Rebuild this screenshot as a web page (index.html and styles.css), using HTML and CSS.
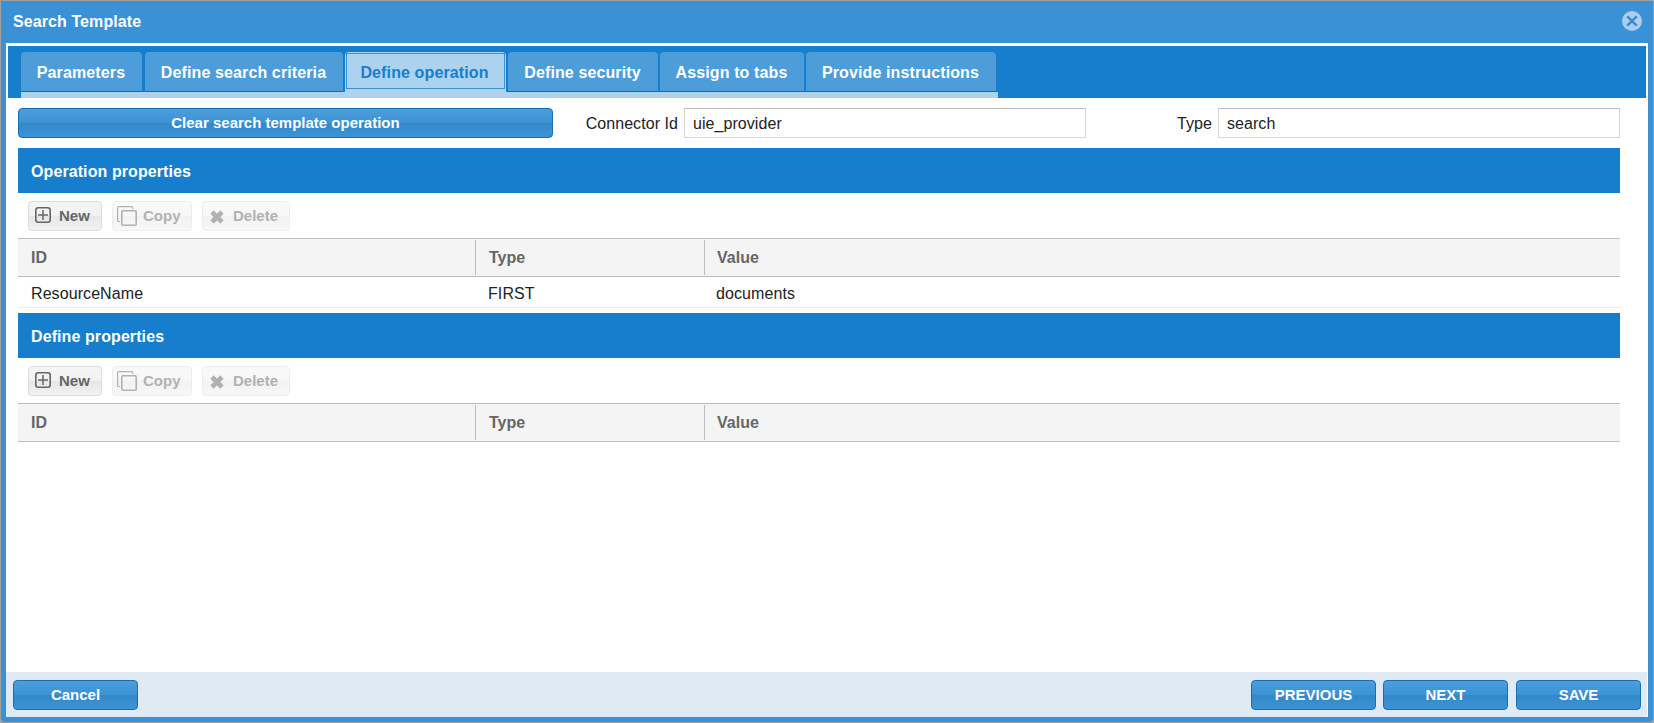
FILE: index.html
```html
<!DOCTYPE html>
<html lang="en">
<head>
<meta charset="utf-8">
<title>Search Template</title>
<link rel="stylesheet" href="styles.css">
</head>
<body>
<svg class="defs" width="0" height="0">
  <symbol id="plus" viewBox="0 0 16 16"><rect x="0.8" y="0.8" width="14.4" height="14.4" rx="2.4" fill="none" stroke="currentColor" stroke-width="1.6"/><path d="M8 3v10M3 8h10" fill="none" stroke="currentColor" stroke-width="1.5"/></symbol>
  <symbol id="copy" viewBox="0 0 20 20"><path d="M3 15.5H1.6a1 1 0 0 1-1-1V1.6a1 1 0 0 1 1-1h13a1 1 0 0 1 1 1V3" fill="none" stroke="currentColor" stroke-width="1.2"/><rect x="4.8" y="4.8" width="14.4" height="14.4" rx="1" fill="none" stroke="currentColor" stroke-width="1.6"/></symbol>
  <symbol id="cross" viewBox="0 0 14 14"><path d="M2 2l10 10M12 2L2 12" fill="none" stroke="currentColor" stroke-width="4.6"/></symbol>
</svg>
<div class="window">
  <header class="titlebar">
    <h1>Search Template</h1>
    <svg class="close" width="20" height="20" viewBox="0 0 20 20"><circle cx="10" cy="10" r="10" fill="#abcdee"/><path d="M5.3 5.3l9.4 9.4M14.7 5.3l-9.4 9.4" stroke="#3a8bd1" stroke-width="2.5"/></svg>
  </header>
  <main class="content">
    <nav class="tabbar">
      <div class="tabs">
        <a class="tab t1">Parameters</a>
        <a class="tab t2">Define search criteria</a>
        <a class="tab t3 active">Define operation</a>
        <a class="tab t4">Define security</a>
        <a class="tab t5">Assign to tabs</a>
        <a class="tab t6">Provide instructions</a>
      </div>
    </nav>
    <div class="body">
      <div class="form">
        <button class="btn clear">Clear search template operation</button>
        <label class="label connector">Connector Id</label>
        <div class="field">uie_provider</div>
        <label class="label type">Type</label>
        <div class="field">search</div>
      </div>
      <section class="section">
        <h2>Operation properties</h2>
        <div class="tools">
          <button class="tool new"><svg width="16" height="16"><use href="#plus"/></svg>New</button>
          <button class="tool copy off"><svg width="20" height="20"><use href="#copy"/></svg>Copy</button>
          <button class="tool delete off"><svg width="14" height="14"><use href="#cross"/></svg>Delete</button>
        </div>
        <div class="row head"><div>ID</div><div>Type</div><div>Value</div></div>
        <div class="row data"><div>ResourceName</div><div>FIRST</div><div>documents</div></div>
      </section>
      <section class="section">
        <h2>Define properties</h2>
        <div class="tools">
          <button class="tool new"><svg width="16" height="16"><use href="#plus"/></svg>New</button>
          <button class="tool copy off"><svg width="20" height="20"><use href="#copy"/></svg>Copy</button>
          <button class="tool delete off"><svg width="14" height="14"><use href="#cross"/></svg>Delete</button>
        </div>
        <div class="row head"><div>ID</div><div>Type</div><div>Value</div></div>
      </section>
    </div>
    <footer class="footer">
      <button class="btn cancel">Cancel</button>
      <button class="btn">PREVIOUS</button>
      <button class="btn next">NEXT</button>
      <button class="btn save">SAVE</button>
    </footer>
  </main>
</div>
</body>
</html>
```
FILE: styles.css
```css
* { box-sizing: border-box; }
body { margin: 0; background: #a0a0a0; font: 16px "Liberation Sans", Arial, sans-serif; color: #222; overflow: hidden; }
h1, h2 { margin: 0; font-size: 16px; font-weight: bold; color: #fff; letter-spacing: 0.09px; }
button { font-family: inherit; margin: 0; }
.defs { display: block; }
.window { width: 1654px; height: 723px; border: 1px solid #a0a0a0; border-radius: 0 0 5px 5px; background: #3a91d5; padding: 0 5px 5px; display: flex; flex-direction: column; }
.titlebar { height: 42px; display: flex; align-items: center; justify-content: space-between; padding: 0 6px 2px 7px; }
.titlebar h1 { padding-top: 2px; }
.close { display: block; }
.content { flex: 1; width: 1642px; background: #fff; padding-top: 3px; display: flex; flex-direction: column; }
.tabbar { height: 52px; margin: 0 2px; background: #167ecc; padding: 6px 0 0 13px; }
.tabs { width: 977px; height: 46px; display: flex; border-bottom: 6px solid #add2ed; }
.tab { height: 40px; margin-right: 2px; display: flex; align-items: center; justify-content: center; padding: 2px 1px 0 0; background: #4c9dd9; border-bottom: 1px solid #505868; border-radius: 4px 4px 0 0; color: #fff; font-weight: bold; letter-spacing: 0.12px; white-space: nowrap; }
.t1 { width: 121px; margin-right: 3px; }
.t2 { width: 198px; }
.tab.active { width: 161px; background: #add2ed; color: #167ecc; border-bottom: 0; padding: 1px 2px 0 0; position: relative; }
.active::after { content: ""; position: absolute; inset: 1px 1px 3px; border: 1px solid #3a91d5; }
.t4 { width: 150px; }
.t5 { width: 144px; }
.t6 { width: 190px; margin-right: 0; }
.body { flex: 1; padding: 10px 28px 0 12px; }
.form { display: flex; align-items: center; height: 30px; margin-bottom: 10px; }
.btn { width: 125px; height: 30px; padding: 0 0 2px; border: 1px solid #166fb2; border-radius: 4px; background: linear-gradient(#4d9eda, #3b92d4 50%, #3487c8 51%, #3b94d7); color: #fff; font-size: 15px; font-weight: bold; }
.clear { width: 535px; }
.label { text-align: right; padding: 2px 6px 0 0; letter-spacing: 0.06px; }
.connector { width: 131px; }
.type { width: 132px; }
.field { width: 402px; height: 30px; border: 1px solid #d6d6d6; border-top-color: #bdbdbd; padding-left: 8px; line-height: 29px; letter-spacing: 0.06px; }
.section { margin-bottom: 5px; }
.section h2 { height: 45px; line-height: 48px; background: #167ecc; padding-left: 13px; }
.tools { height: 45px; padding: 8px 10px 0; display: flex; gap: 10px; }
.tool { height: 30px; display: flex; align-items: center; padding: 0 0 1px 7px; border: 1px solid #dcdcdc; border-radius: 4px; background: linear-gradient(#f5f5f5, #f1f1f1 50%, #e6e6e6 51%, #f2f2f2); color: #666; font-size: 15px; font-weight: bold; white-space: nowrap; }
.tool svg { display: block; flex: none; }
.new { width: 74px; padding-left: 6px; }
.new svg { margin: -1px 8px 0 0; }
.copy { width: 80px; padding-left: 4px; }
.copy svg { margin-right: 6px; }
.delete { width: 88px; }
.delete svg { margin: 2px 9px 0 0; }
.off { opacity: 0.5; }
.row { display: grid; grid-template-columns: 457px 229px 1fr; }
.head { height: 39px; padding: 1px 0; border-top: 1px solid #bdbdbd; border-bottom: 1px solid #bdbdbd; background: #f4f4f4; color: #666; font-weight: bold; line-height: 35px; }
.head div { padding-left: 13px; }
.head div + div { border-left: 1px solid #bdbdbd; }
.head div:last-child, .data div:last-child { padding-left: 12px; }
.data { height: 31px; border-bottom: 1px solid #ebebeb; line-height: 33px; letter-spacing: 0.08px; }
.data div { padding-left: 13px; }
.footer { width: 1641px; height: 45px; background: #e0eaf4; padding: 8px 6px 0 7px; display: flex; }
.cancel { margin-right: auto; }
.next { margin: 0 8px 0 7px; }
```
